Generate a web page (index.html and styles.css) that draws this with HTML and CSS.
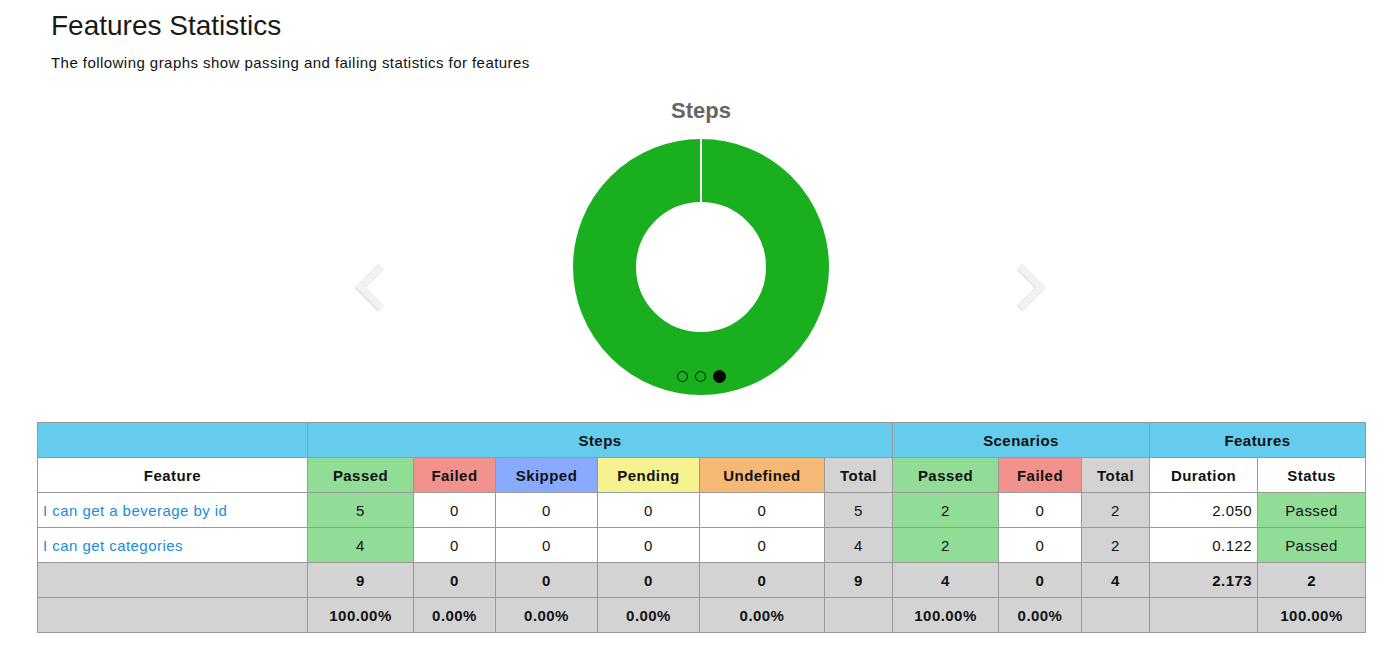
FILE: index.html
```html
<!DOCTYPE html>
<html>
<head>
<meta charset="utf-8">
<link rel="stylesheet" href="styles.css">
</head>
<body>
<div class="page">
  <h1 class="title">Features Statistics</h1>
  <p class="subtitle">The following graphs show passing and failing statistics for features</p>

  <div class="carousel">
    <svg class="arrow" width="40" height="60" viewBox="0 0 40 60">
      <polyline class="arrow-shadow" points="25,13 7,31 25,49"/>
      <polyline class="arrow-line" points="26,12 8,30 26,48"/>
    </svg>
    <div class="chart">
      <div class="chart-title">Steps</div>
      <div class="donut-wrap">
        <svg class="donut" width="256" height="256" viewBox="0 0 256 256">
          <circle cx="128" cy="128" r="96.5" fill="none" stroke="#1aaf1f" stroke-width="63"/>
          <line x1="128" y1="0" x2="128" y2="64" stroke="#ffffff" stroke-width="2"/>
        </svg>
        <div class="dots">
          <span class="dot"></span>
          <span class="dot"></span>
          <span class="dot dot-active"></span>
        </div>
      </div>
    </div>
    <svg class="arrow" width="40" height="60" viewBox="0 0 40 60">
      <polyline class="arrow-shadow" points="13,13 31,31 13,49"/>
      <polyline class="arrow-line" points="14,12 32,30 14,48"/>
    </svg>
  </div>

  <table class="stats">
    <colgroup>
      <col style="width:270px"><col style="width:106px"><col style="width:82px"><col style="width:102px"><col style="width:102px"><col style="width:125px"><col style="width:68px"><col style="width:106px"><col style="width:83px"><col style="width:68px"><col style="width:108px"><col style="width:108px">
    </colgroup>
    <thead>
      <tr class="group">
        <th></th>
        <th colspan="6">Steps</th>
        <th colspan="3">Scenarios</th>
        <th colspan="2">Features</th>
      </tr>
      <tr class="heads">
        <th>Feature</th>
        <th class="passed">Passed</th>
        <th class="failed">Failed</th>
        <th class="skipped">Skipped</th>
        <th class="pending">Pending</th>
        <th class="undefined">Undefined</th>
        <th class="total">Total</th>
        <th class="passed">Passed</th>
        <th class="failed">Failed</th>
        <th class="total">Total</th>
        <th>Duration</th>
        <th>Status</th>
      </tr>
    </thead>
    <tbody>
      <tr>
        <td class="name"><a href="#">I can get a beverage by id</a></td>
        <td class="passed">5</td><td>0</td><td>0</td><td>0</td><td>0</td><td class="total">5</td>
        <td class="passed">2</td><td>0</td><td class="total">2</td>
        <td class="duration">2.050</td><td class="passed">Passed</td>
      </tr>
      <tr>
        <td class="name"><a href="#">I can get categories</a></td>
        <td class="passed">4</td><td>0</td><td>0</td><td>0</td><td>0</td><td class="total">4</td>
        <td class="passed">2</td><td>0</td><td class="total">2</td>
        <td class="duration">0.122</td><td class="passed">Passed</td>
      </tr>
    </tbody>
    <tfoot>
      <tr>
        <td></td>
        <td>9</td><td>0</td><td>0</td><td>0</td><td>0</td><td>9</td>
        <td>4</td><td>0</td><td>4</td>
        <td class="duration">2.173</td><td>2</td>
      </tr>
      <tr>
        <td></td>
        <td>100.00%</td><td>0.00%</td><td>0.00%</td><td>0.00%</td><td>0.00%</td><td></td>
        <td>100.00%</td><td>0.00%</td><td></td>
        <td></td><td>100.00%</td>
      </tr>
    </tfoot>
  </table>
</div>
</body>
</html>
```

FILE: styles.css
```css
html, body {
  margin: 0;
  padding: 0;
  background: #ffffff;
}

body {
  font-family: "Liberation Sans", Arial, sans-serif;
  color: #111111;
}

.page {
  padding: 0 35px 0 37px;
}

.title {
  margin: 0;
  padding: 10px 0 0 14px;
  font-size: 28px;
  font-weight: normal;
  line-height: 32px;
  color: #1a1a1a;
}

.subtitle {
  margin: 0;
  padding: 11px 0 0 14px;
  font-size: 15px;
  line-height: 20px;
  letter-spacing: 0.45px;
  color: #111111;
}

.carousel {
  display: flex;
  justify-content: center;
  align-items: flex-start;
  gap: 180px;
  margin-top: 24px;
}

.arrow {
  display: block;
  margin-top: 160px;
}

.arrow-line {
  fill: none;
  stroke: #f2f2f2;
  stroke-width: 7;
  stroke-linecap: square;
  stroke-linejoin: miter;
}

.arrow-shadow {
  fill: none;
  stroke: rgba(0, 0, 0, 0.1);
  stroke-width: 8;
  stroke-linecap: square;
  stroke-linejoin: miter;
}

.chart {
  width: 256px;
  display: flex;
  flex-direction: column;
  align-items: center;
}

.chart-title {
  font-size: 22px;
  font-weight: bold;
  color: #666666;
  line-height: 26px;
  padding-top: 1px;
  height: 42px;
  box-sizing: border-box;
}

.donut-wrap {
  position: relative;
  width: 256px;
  height: 256px;
}

.donut {
  display: block;
}

.dots {
  position: absolute;
  left: 0;
  right: 0;
  top: 232px;
  display: flex;
  justify-content: center;
  gap: 7px;
}

.dot {
  width: 9px;
  height: 9px;
  border: 1.5px solid #000000;
  border-radius: 50%;
}

.dot-active {
  background: #000000;
  width: 11px;
  height: 11px;
  margin-top: -1px;
  border-width: 1px;
}

.stats {
  margin-top: 27px;
  width: 1328px;
  table-layout: fixed;
  border-collapse: collapse;
  font-size: 15px;
  letter-spacing: 0.45px;
  color: #111111;
}

.stats th,
.stats td {
  border: 1px solid #999999;
  height: 35px;
  padding: 0 5px;
  text-align: center;
  vertical-align: middle;
  box-sizing: border-box;
}

.stats th {
  font-weight: bold;
}

.stats .group th {
  background: #66ccee;
}

.stats .name {
  text-align: left;
}

.stats .name a {
  color: #1a8dd8;
  text-decoration: none;
}

.stats .duration {
  text-align: right;
}

.stats .passed { background: #92dd96; }
.stats .failed { background: #f2928c; }
.stats .skipped { background: #88aaff; }
.stats .pending { background: #f5f28f; }
.stats .undefined { background: #f5b975; }
.stats .total { background: #d3d3d3; }

.stats tfoot td {
  background: #d3d3d3;
  font-weight: bold;
}
```
